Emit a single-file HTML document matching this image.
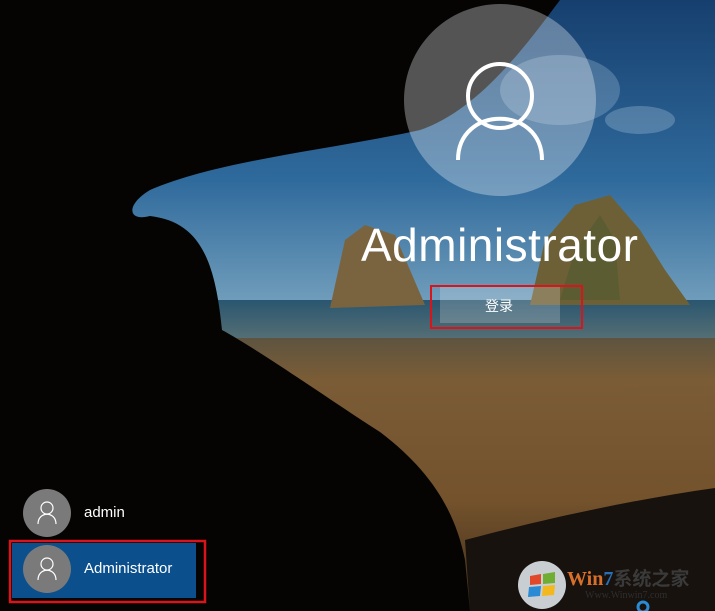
<!DOCTYPE html>
<html><head><meta charset="utf-8"><style>
html,body{margin:0;padding:0;width:715px;height:611px;overflow:hidden;background:#000}
svg{position:absolute;left:0;top:0}
.t{position:absolute;color:#fff;font-family:"Liberation Sans","Noto Sans CJK SC",sans-serif;white-space:nowrap}
</style></head><body>
<svg width="715" height="611" viewBox="0 0 715 611">
<defs>
<linearGradient id="sky" x1="0" y1="0" x2="0" y2="1">
<stop offset="0" stop-color="#163f6e"/><stop offset="0.6" stop-color="#2f6a9c"/><stop offset="1" stop-color="#6f9cba"/>
</linearGradient>
<linearGradient id="sand" x1="0" y1="0" x2="0" y2="1">
<stop offset="0" stop-color="#5e5440"/><stop offset="0.15" stop-color="#7a5c36"/><stop offset="0.6" stop-color="#73522c"/><stop offset="1" stop-color="#3e2c1a"/>
</linearGradient>
<linearGradient id="sea" x1="0" y1="0" x2="0" y2="1">
<stop offset="0" stop-color="#2a5670"/><stop offset="1" stop-color="#566f74"/>
</linearGradient>
</defs>
<rect x="0" y="0" width="715" height="300" fill="url(#sky)"/>
<ellipse cx="560" cy="90" rx="60" ry="35" fill="#a9c3dc" opacity="0.3"/>
<ellipse cx="640" cy="120" rx="35" ry="14" fill="#b5cde0" opacity="0.3"/>
<rect x="0" y="300" width="715" height="40" fill="url(#sea)"/>
<rect x="0" y="338" width="715" height="273" fill="url(#sand)"/>
<path d="M330,308 L345,240 L365,225 L395,235 L410,270 L425,305 Z" fill="#7a6440"/>
<path d="M530,305 L545,240 L575,205 L610,195 L640,230 L665,270 L690,305 Z" fill="#6e6036"/>
<path d="M560,300 L575,250 L600,215 L615,240 L620,300 Z" fill="#4e5a2e" opacity="0.6"/>
<path d="M465,540 C540,520 630,500 715,488 L715,611 L470,611 Z" fill="#17120e"/>
<path d="M0,0 L560,0 C530,40 480,110 420,130 C330,150 220,160 150,190 C125,205 128,222 150,216 C200,222 215,260 222,330 C262,352 330,400 380,432 C430,470 455,510 465,560 L470,611 L0,611 Z" fill="#050403"/>
<circle cx="500" cy="100" r="96" fill="#fff" opacity="0.32"/>
<circle cx="500" cy="96" r="32" fill="none" stroke="#fff" stroke-width="4"/>
<path d="M458,160 C458,105 542,105 542,160" fill="none" stroke="#fff" stroke-width="4"/>
<rect x="440" y="287" width="120" height="36" fill="#fff" opacity="0.2"/>
<rect x="431" y="286" width="151" height="42" fill="none" stroke="#d9141b" stroke-width="2"/>
<circle cx="47" cy="513" r="24" fill="#7a7a7a"/>
<circle cx="47" cy="508" r="6" fill="none" stroke="#fff" stroke-width="1.2"/>
<path d="M38,524 C38,511 56,511 56,524" fill="none" stroke="#fff" stroke-width="1.2"/>
<rect x="12" y="543" width="184" height="55" fill="#0b4f8c"/>
<rect x="10" y="541" width="195" height="61" fill="none" stroke="#d9141b" stroke-width="2.5"/>
<circle cx="47" cy="569" r="24" fill="#7a7a7a"/>
<circle cx="47" cy="564" r="6" fill="none" stroke="#fff" stroke-width="1.2"/>
<path d="M38,580 C38,567 56,567 56,580" fill="none" stroke="#fff" stroke-width="1.2"/>
<circle cx="542" cy="585" r="24" fill="#c9ced3"/>
<path d="M530,576 L541,574 L541,584 L530,585 Z" fill="#e2482a"/>
<path d="M543,574 L555,572 L555,583 L543,584 Z" fill="#6fae32"/>
<path d="M529,587 L541,586 L540,596 L528,597 Z" fill="#2a8ad4"/>
<path d="M543,586 L555,585 L554,595 L542,596 Z" fill="#f3b81e"/>
<circle cx="643" cy="607" r="5" fill="none" stroke="#2a8ad4" stroke-width="3"/>
</svg>
<div class="t" style="left:361px;top:218px;font-size:46px;font-weight:300;letter-spacing:0.5px">Administrator</div>
<div class="t" style="left:485px;top:296px;font-size:14px">登录</div>
<div class="t" style="left:84px;top:504px;font-size:15px">admin</div>
<div class="t" style="left:84px;top:560px;font-size:15px">Administrator</div>
<div class="t" style="left:567px;top:564px;font-size:20px;font-weight:bold;color:#d9702a;font-family:'Liberation Serif',serif">Win<span style="color:#2a6fb5">7</span><span style="color:#3a3a3a;font-family:'Noto Sans CJK SC',sans-serif;font-size:19px">系统之家</span></div>
<div class="t" style="left:585px;top:590px;font-size:10px;color:#2e2e2e;font-family:'Liberation Serif',serif">Www.Winwin7.com</div>
</body></html>
